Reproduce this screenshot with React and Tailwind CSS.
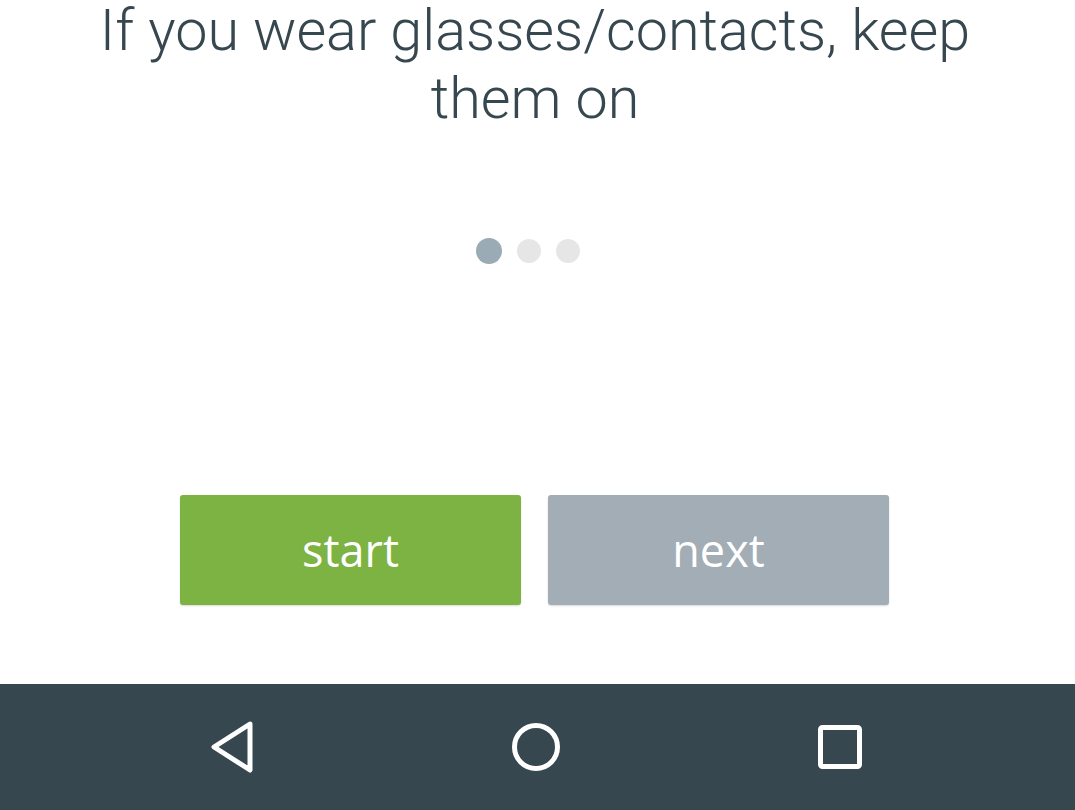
export default function App() {
  return (
    <div className="w-[1075px] h-[810px] bg-white flex flex-col overflow-hidden">
      <div className="flex-1 flex flex-col items-center">
        <h1
          className="mt-[-3px] mr-[5px] w-[940px] text-center text-[57.5px] leading-[68px] font-light text-[#37474f]"
          style={{ fontFamily: "Roboto, sans-serif" }}
        >
          If you wear glasses/contacts, keep them on
        </h1>

        <div className="mt-[105px] mr-[20px] flex items-center gap-[15px]">
          <span className="w-[26px] h-[26px] rounded-full bg-[#9aabb6]" />
          <span className="w-[24px] h-[24px] rounded-full bg-[#e6e6e6]" />
          <span className="w-[24px] h-[24px] rounded-full bg-[#e6e6e6]" />
        </div>

        <div className="mt-[231px] mr-[6px] flex gap-[27px]">
          <button
            className="w-[341px] h-[110px] rounded-[3px] bg-[#7cb342] text-white text-[45px] shadow-[0_1px_2px_rgba(0,0,0,0.15)]"
            style={{ fontFamily: "'Open Sans', sans-serif" }}
          >
            start
          </button>
          <button
            className="w-[341px] h-[110px] rounded-[3px] bg-[#a2adb5] text-white text-[45px] shadow-[0_1px_2px_rgba(0,0,0,0.15)]"
            style={{ fontFamily: "'Open Sans', sans-serif" }}
          >
            next
          </button>
        </div>
      </div>

      <nav className="h-[126px] bg-[#37474f] flex items-center justify-center gap-[259px] pr-[5px]">
        <svg width="46" height="52" viewBox="0 0 46 52" className="shrink-0 ml-[4px] mr-[-4px]">
          <path d="M40 3 L4 26 L40 49 Z" fill="none" stroke="#fff" strokeWidth="5" strokeLinejoin="round" />
        </svg>
        <svg width="50" height="50" viewBox="0 0 50 50" className="shrink-0">
          <circle cx="25" cy="25" r="21.5" fill="none" stroke="#fff" strokeWidth="5" />
        </svg>
        <svg width="44" height="44" viewBox="0 0 44 44" className="shrink-0 mr-[2px] ml-[-2px]">
          <rect x="2.5" y="2.5" width="39" height="39" rx="2" fill="none" stroke="#fff" strokeWidth="5" />
        </svg>
      </nav>
    </div>
  );
}
